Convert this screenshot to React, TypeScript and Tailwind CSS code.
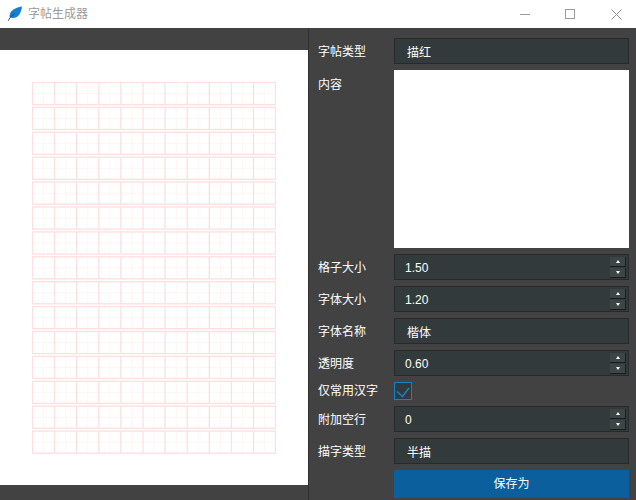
import { useState } from 'react';

const FONT = "font-['Liberation_Sans','Noto_Sans_CJK_SC',sans-serif]";

const ROWS = Array.from({ length: 15 }, (_, i) => i);
const CELLS = Array.from({ length: 11 }, (_, i) => i);

// preview of the copybook page
function Sheet() {
    const pitchY = 24.9;
    const size = 22.1;
    return (
        <svg width="244" height="372" viewBox="0 0 244 372" className="block">
            {ROWS.map((r) => {
                const y = 0.5 + r * pitchY;
                return (
                    <g key={r} fill="none">
                        {/* faint centre lines */}
                        <line x1="0.5" x2="243" y1={y + size / 2} y2={y + size / 2} stroke="#fff5f5" />
                        {CELLS.map((c) => (
                            <line
                                key={c}
                                x1={0.5 + (c + 0.5) * size}
                                x2={0.5 + (c + 0.5) * size}
                                y1={y}
                                y2={y + size}
                                stroke="#fff6f6"
                            />
                        ))}
                        {CELLS.slice(1).map((c) => (
                            <line
                                key={c}
                                x1={0.5 + c * size}
                                x2={0.5 + c * size}
                                y1={y}
                                y2={y + size}
                                stroke={c % 2 === 0 ? '#f8e0e0' : '#ffe0e0'}
                                strokeWidth="1.3"
                            />
                        ))}
                        <rect x="0.5" y={y} width="243" height={size} stroke="#ffe0e1" strokeWidth="1.4" />
                    </g>
                );
            })}
        </svg>
    );
}

function Field({ label, children, tall }: { label: string; children: React.ReactNode; tall?: boolean }) {
    return (
        <div className={tall ? 'flex h-[178px] shrink-0' : 'flex h-[26px] shrink-0 items-center'}>
            <div className={tall ? 'w-[76px] shrink-0 pt-[6px] text-white' : 'w-[76px] shrink-0 pt-[2px] text-white'}>{label}</div>
            {children}
        </div>
    );
}

function TextBox({ value }: { value: string }) {
    return (
        <div className="flex h-[26px] w-[235px] items-center border border-[#272b2b] bg-[#323a3c] pl-[12px] pt-[3px] text-white">
            {value}
        </div>
    );
}

function SpinBox({ value }: { value: string }) {
    return (
        <div className="relative flex h-[26px] w-[235px] items-center border border-[#272b2b] bg-[#323a3c] pl-[10px] pt-[2px] text-white">
            {value}
            <div className="absolute right-[2px] top-[2px] flex flex-col gap-[1px]">
                <div className="flex h-[10px] w-[16px] items-center justify-center border-r border-b border-r-[#1b1e1e] border-b-[#1b1e1e] bg-[#3e4645]">
                    <div className="h-0 w-0 border-x-[2.5px] border-b-[3px] border-x-transparent border-b-white" />
                </div>
                <div className="flex h-[10px] w-[16px] items-center justify-center border-r border-b border-r-[#1b1e1e] border-b-[#1b1e1e] bg-[#3e4645]">
                    <div className="h-0 w-0 border-x-[2.5px] border-t-[3px] border-x-transparent border-t-white" />
                </div>
            </div>
        </div>
    );
}

export default function App() {
    const [onlyCommon, setOnlyCommon] = useState(true);

    return (
        <div className={`flex h-[500px] w-[636px] flex-col overflow-hidden bg-[#424242] text-[12px] ${FONT}`}>
            {/* Title bar */}
            <div className="flex h-[28px] shrink-0 items-center bg-white">
                <svg width="16" height="16" viewBox="0 0 16 16" className="ml-[7px] mt-[-1px]">
                    <defs>
                        <linearGradient id="feather" x1="1" y1="15" x2="15" y2="1">
                            <stop offset="0" stopColor="#0a5fb0" />
                            <stop offset="1" stopColor="#21a2ea" />
                        </linearGradient>
                    </defs>
                    <path d="M15 0.5C10.5 1 5.5 3 3.4 6.8 2.5 8.6 2.4 10.2 2.9 11.6 6.8 12.4 10.2 11.6 12 9 13.8 6.2 14.8 3.4 15 0.5Z" fill="url(#feather)" />
                    <path d="M1.2 14.8 3 11.6 7.5 7.5" stroke="#0b4f8e" strokeWidth="0.9" fill="none" />
                </svg>
                <span className="ml-[5px] text-[#9a9a9a]">字帖生成器</span>
                <div className="ml-auto flex items-center">
                    <div className="mr-[35px] h-[1px] w-[10px] bg-[#9a9a9a]" />
                    <div className="mr-[36px] h-[10px] w-[10px] border border-[#9a9a9a]" />
                    <svg width="11" height="11" viewBox="0 0 11 11" className="mr-[14px]">
                        <path d="M0.5 0.5 10.5 10.5M10.5 0.5 0.5 10.5" stroke="#8f8f8f" strokeWidth="1" fill="none" />
                    </svg>
                </div>
            </div>

            <div className="flex min-h-0 flex-1">
                {/* Preview */}
                <div className="flex w-[308px] shrink-0 flex-col pt-[22px]">
                    <div className="h-[435px] bg-white pl-[32px] pt-[32px]">
                        <Sheet />
                    </div>
                </div>

                {/* Settings */}
                <div className="flex flex-1 flex-col gap-[6px] border-l border-[#2f2f2f] pl-[9px] pt-[10px]">
                    <Field label="字帖类型">
                        <TextBox value="描红" />
                    </Field>
                    <Field label="内容" tall>
                        <textarea className="h-[178px] w-[235px] resize-none bg-white outline-none" readOnly />
                    </Field>
                    <Field label="格子大小">
                        <SpinBox value="1.50" />
                    </Field>
                    <Field label="字体大小">
                        <SpinBox value="1.20" />
                    </Field>
                    <Field label="字体名称">
                        <TextBox value="楷体" />
                    </Field>
                    <Field label="透明度">
                        <SpinBox value="0.60" />
                    </Field>
                    <div className="flex h-[18px] shrink-0 items-center">
                        <div className="w-[76px] shrink-0 text-white">仅常用汉字</div>
                        <button
                            onClick={() => setOnlyCommon(!onlyCommon)}
                            className="flex h-[18px] w-[18px] items-center justify-center border border-[#0e84d0] bg-[#323a3c]"
                        >
                            {onlyCommon && (
                                <svg width="16" height="16" viewBox="0 0 16 16">
                                    <path d="M2 8.5 7.5 13.5 14 5" stroke="#1584cf" strokeWidth="1.5" fill="none" />
                                </svg>
                            )}
                        </button>
                    </div>
                    <Field label="附加空行">
                        <SpinBox value="0" />
                    </Field>
                    <Field label="描字类型">
                        <TextBox value="半描" />
                    </Field>
                    <div className="flex h-[28px] shrink-0 pl-[76px]">
                        <button className="h-[28px] w-[235px] bg-[#0a5f9c] text-white">保存为</button>
                    </div>
                </div>
            </div>
        </div>
    );
}
